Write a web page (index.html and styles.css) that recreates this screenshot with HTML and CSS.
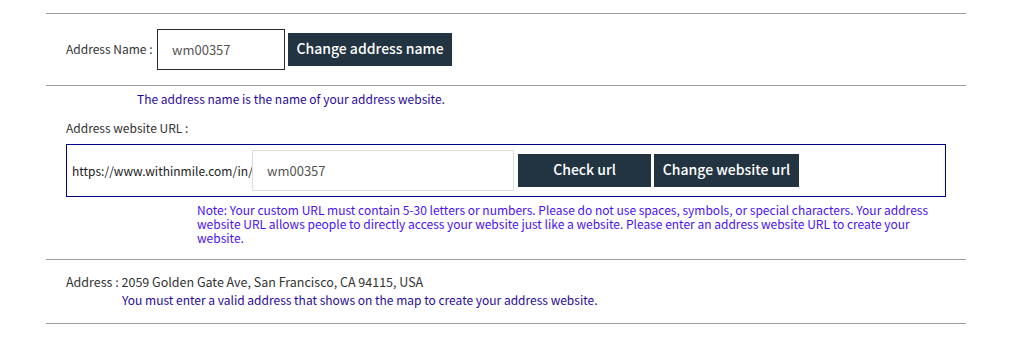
FILE: index.html
```html
<!DOCTYPE html>
<html>
<head>
<meta charset="utf-8">
<link rel="stylesheet" href="styles.css">
</head>
<body>
<div class="panel">
  <div class="rule"></div>
  <div class="name-row">
    <span class="label">Address Name :</span>
    <div class="field name-field">wm00357</div>
    <button class="btn btn-name">Change address name</button>
  </div>
  <div class="rule"></div>
  <p class="note-name">The address name is the name of your address website.</p>
  <p class="label url-label">Address website URL :</p>
  <div class="url-box">
    <span class="prefix">https://www.withinmile.com/in/</span>
    <div class="field url-field">wm00357</div>
    <button class="btn btn-check">Check url</button>
    <button class="btn btn-change">Change website url</button>
  </div>
  <p class="note-url">Note: Your custom URL must contain 5-30 letters or numbers. Please do not use spaces, symbols, or special characters. Your address website URL allows people to directly access your website just like a website. Please enter an address website URL to create your website.</p>
  <div class="rule"></div>
  <div class="address">
    <p class="label addr-line">Address : 2059 Golden Gate Ave, San Francisco, CA 94115, USA</p>
    <p class="note-addr">You must enter a valid address that shows on the map to create your address website.</p>
  </div>
  <div class="rule"></div>
</div>
</body>
</html>
```
FILE: styles.css
```css
* { box-sizing: border-box; }
html, body { margin: 0; padding: 0; background: #fff; }
body {
  font-family: "Noto Sans CJK KR", "Noto Sans", sans-serif;
  font-size: 12px;
  color: #333;
}
p { margin: 0; }
.panel {
  margin-left: 46px;
  width: 920px;
  padding-top: 13px;
}
.rule { height: 1px; background: #9e9e9e; }
.name-row {
  height: 71px;
  display: flex;
  align-items: center;
  padding-left: 20px;
}
.label { color: #333; line-height: 14px; }
.name-row .label { width: 91px; margin-top: -2px; }
.field {
  background: #fff;
  color: #555;
  font-size: 13px;
  display: flex;
  align-items: center;
  padding-left: 14px;
}
.name-field {
  width: 128px;
  height: 41px;
  border: 1px solid #2b2b2b;
}
.btn {
  border: 0;
  background: #223441;
  color: #fff;
  font-family: "Noto Sans CJK KR", "Noto Sans", sans-serif;
  font-size: 14px;
  font-weight: 500;
  line-height: 31px;
  height: 33px;
  padding: 0 0 2px;
  margin: 0;
}
.btn-name { width: 164px; margin-left: 3px; }
.note-name {
  color: #2a0a9a;
  line-height: 14px;
  margin-top: 6px;
  padding-left: 91px;
}
.url-label { margin-top: 15px; padding-left: 20px; }
.url-box {
  margin: 9px 0 0 20px;
  width: 880px;
  height: 53px;
  border: 1px solid #000088;
  display: flex;
  align-items: center;
  padding-left: 5px;
}
.prefix { color: #222; width: 180px; }
.url-field {
  width: 262px;
  height: 41px;
  border: 1px solid #dedede;
}
.btn-check { width: 133px; margin-left: 4px; }
.btn-change { width: 145px; margin-left: 3px; }
.note-url {
  color: #4a12f2;
  line-height: 14px;
  margin: 6px 0 0 151px;
  width: 740px;
}
.note-url + .rule { margin-top: 14px; }
.address {
  padding: 13px 0 14px 20px;
}
.addr-line { line-height: 18px; font-size: 12.5px; }
.note-addr {
  color: #2a0a9a;
  line-height: 18px;
  padding-left: 56px;
}
```
